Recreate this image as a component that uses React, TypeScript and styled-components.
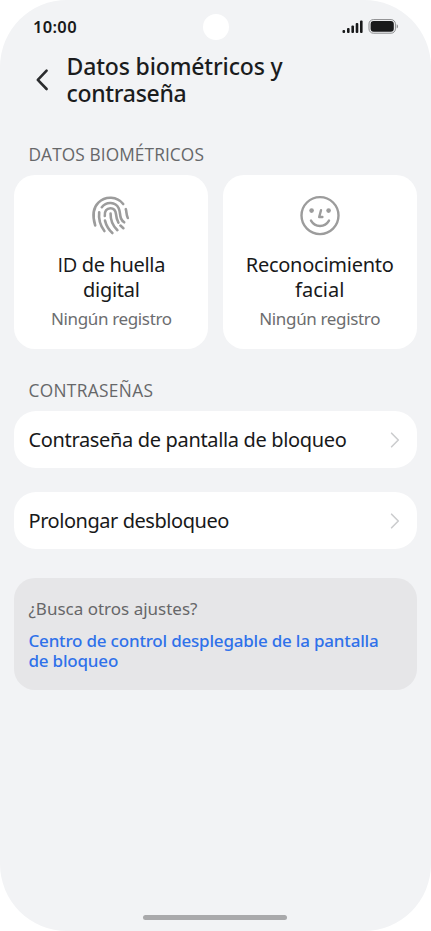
import React from 'react';
import styled, { createGlobalStyle } from 'styled-components';

const GlobalStyle = createGlobalStyle`
  * { box-sizing: border-box; }
  body { margin: 0; background: #fff; font-family: "Noto Sans", "Open Sans", sans-serif; }
  h1, h2, h3, p { margin: 0; font-weight: inherit; }
`;

const Phone = styled.main`
  width: 431px;
  height: 931px;
  padding: 0 14.3px;
  display: flex;
  flex-direction: column;
  overflow: hidden;
  background: #f2f3f5;
  border-radius: 67px;
`;

const StatusBar = styled.header`
  height: 54px;
  flex: none;
  display: grid;
  grid-template-columns: 1fr 26px 1fr;
  align-items: center;
  padding: 0 18.2px 0 18.6px;
`;

const Time = styled.span`
  font-size: 16.5px;
  font-weight: 600;
  line-height: 20px;
  letter-spacing: 0.35px;
  color: #18191a;
`;

const Camera = styled.span`
  width: 26px;
  height: 26px;
  border-radius: 50%;
  background: #fff;
`;

const Indicators = styled.div`
  display: flex;
  justify-content: flex-end;
  svg { display: block; }
`;

const TitleBar = styled.div`
  display: flex;
  flex: none;
  height: 54px;
  padding-left: 19.7px;
  gap: 16.5px;
  svg { margin-top: 14px; flex: none; }
`;

const Line = styled.span<{ $ls?: number }>`
  display: block;
  white-space: nowrap;
  letter-spacing: ${p => p.$ls ?? 0}px;
`;

const Plain = styled.span`
  font-family: "Open Sans", "Noto Sans", sans-serif;
`;

const Title = styled.h1`
  margin-top: -1px;
  font-size: 23px;
  font-weight: 500;
  line-height: 27px;
  color: #1b1c1d;
`;

const SectionLabel = styled.h2<{ $top: number }>`
  margin: ${p => p.$top}px 0 0 14.2px;
  height: 24px;
  font-family: "Open Sans", "Noto Sans", sans-serif;
  font-size: 17.3px;
  line-height: 24px;
  color: #666769;
`;

const Cards = styled.section`
  display: grid;
  grid-template-columns: 1fr 1fr;
  gap: 14.3px;
  margin-top: 8px;
`;

const Card = styled.button`
  height: 174px;
  padding: 18px 0 0;
  border: 0;
  border-radius: 21px;
  background: #fff;
  font-family: inherit;
  display: flex;
  flex-direction: column;
  align-items: center;
  svg { flex: none; }
`;

const CardTitle = styled.h3`
  margin-top: 15px;
  font-size: 20px;
  line-height: 25px;
  color: #18191a;
`;

const CardStatus = styled.p`
  margin-top: 5px;
  font-size: 17px;
  line-height: 24px;
  color: #6c6d6f;
`;

const Row = styled.button<{ $top: number }>`
  height: 57px;
  flex: none;
  margin: ${p => p.$top}px 0 0;
  padding: 0 15.7px 0 14.2px;
  border: 0;
  border-radius: 22px;
  background: #fff;
  color: #18191a;
  font-family: inherit;
  font-size: 20px;
  line-height: 28px;
  display: flex;
  align-items: center;
  justify-content: space-between;
`;

const Panel = styled.aside`
  height: 112px;
  margin-top: 29px;
  padding: 19px 14.2px;
  border-radius: 21px;
  background: #e6e6e8;
`;

const Question = styled.p`
  font-size: 17px;
  line-height: 24px;
  color: #666769;
`;

const SettingsLink = styled.a`
  display: block;
  margin-top: 10px;
  font-size: 17px;
  font-weight: 500;
  line-height: 19.5px;
  color: #2f71ea;
`;

const HomeIndicator = styled.div`
  width: 144px;
  height: 5px;
  margin: auto auto 11px 128.7px;
  border-radius: 3px;
  background: #a9a9ab;
`;

const StatusIcons = () => (
  <svg width="57" height="16" viewBox="0 0 57 16">
    <g fill="#18191a">
      <rect x="0.5" y="11" width="2.6" height="3" rx="1" />
      <rect x="5" y="9" width="2.6" height="5" rx="1" />
      <rect x="9.4" y="6.6" width="2.6" height="7.4" rx="1" />
      <rect x="13.7" y="4" width="2.6" height="10" rx="1" />
      <rect x="18" y="1.6" width="2.6" height="12.4" rx="1" />
      <rect x="28.6" y="2" width="23.2" height="10.8" rx="3" />
    </g>
    <rect x="27" y="0.6" width="26.4" height="13.6" rx="4.3" fill="none" stroke="#8a8b8d" strokeWidth="1" />
    <path d="M54.7 5.2q1.3.6 1.3 2.2t-1.3 2.2z" fill="#8a8b8d" />
  </svg>
);

const BackIcon = () => (
  <svg width="16" height="24" viewBox="0 0 16 24" fill="none" stroke="#2b2c2e" strokeWidth="2.6" strokeLinecap="round" strokeLinejoin="round">
    <path d="M12.6 2.6 3.8 11.8 12.6 21" />
  </svg>
);

const FingerprintIcon = () => (
  <svg width="44" height="44" viewBox="0 0 44 44" fill="none" stroke="#9c9c9c" strokeWidth="2.6" strokeLinecap="round">
    <path d="M6.2 32.4C3.4 23.2 4.2 14.6 9.4 9.6 16.4 2.6 28.2 3.2 34.2 11" />
    <path d="M12.8 14.2c4.6-6 13.8-5.4 16.9 1 1.8 3.8.8 6.8 2.4 10.4.7 1.6 1.7 2.7 3.1 3.7" />
    <path d="M10.2 19.2c-.8 6.8 1 13.4 5.2 18.8" />
    <path d="M15.8 23c-.6-5 2-7.8 5.6-7.8 3.8 0 5.3 2.8 5.6 6 .3 3.4.8 5.8 2.4 8.4" />
    <path d="M16 27.6c1.2 4.8 3.6 9 7.4 12.4" />
    <path d="M21.6 20.6c-.2 6.4 2 12 6.8 16.6" />
    <path d="M31.4 32.6 34.4 35.2" />
    <path d="M36.8 16.2c.9 2.8.4 5.8 2 8.8" />
  </svg>
);

const FaceIcon = () => (
  <svg width="44" height="44" viewBox="0 0 44 44" fill="none" stroke="#9c9c9c" strokeWidth="2.4" strokeLinecap="round" strokeLinejoin="round">
    <circle cx="22" cy="22.6" r="18.5" />
    <circle cx="13.6" cy="17.6" r="2.3" fill="#9c9c9c" stroke="none" />
    <circle cx="30.6" cy="17.6" r="2.3" fill="#9c9c9c" stroke="none" />
    <path d="M23 17.2 21.2 24H24.4" />
    <path d="M13 27.6c4.2 7.2 13.8 7.2 18 0" />
  </svg>
);

const Chevron = () => (
  <svg width="12" height="18" viewBox="0 0 12 18" fill="none" stroke="#cbccce" strokeWidth="1.6" strokeLinecap="round" strokeLinejoin="round">
    <path d="M2.6 2.2 9.3 9 2.6 15.8" />
  </svg>
);

export default function App() {
  return (
    <>
      <GlobalStyle />
      <Phone>
        <StatusBar>
          <Time>10:00</Time>
          <Camera />
          <Indicators><StatusIcons /></Indicators>
        </StatusBar>
        <TitleBar>
          <BackIcon />
          <Title>
            <Line $ls={-0.15}>Datos biométricos y</Line>
            <Line $ls={-0.3}>contraseña</Line>
          </Title>
        </TitleBar>
        <SectionLabel $top={35}><Line $ls={0.1}>DATOS BIOMÉTRICOS</Line></SectionLabel>
        <Cards>
          <Card>
            <FingerprintIcon />
            <CardTitle><Line $ls={-0.35}><Plain>ID</Plain> de huella</Line><Line $ls={-0.3}>digital</Line></CardTitle>
            <CardStatus><Line $ls={-0.35}>Ningún registro</Line></CardStatus>
          </Card>
          <Card>
            <FaceIcon />
            <CardTitle><Line $ls={-0.25}>Reconocimiento</Line><Line>facial</Line></CardTitle>
            <CardStatus><Line $ls={-0.35}>Ningún registro</Line></CardStatus>
          </Card>
        </Cards>
        <SectionLabel $top={30}><Line $ls={0.35}>CONTRASEÑAS</Line></SectionLabel>
        <Row $top={8}><Line $ls={-0.34}>Contraseña de pantalla de bloqueo</Line><Chevron /></Row>
        <Row $top={24}><Line $ls={-0.45}>Prolongar desbloqueo</Line><Chevron /></Row>
        <Panel>
          <Question><Line>¿Busca otros ajustes?</Line></Question>
          <SettingsLink>
            <Line $ls={-0.2}>Centro de control desplegable de la pantalla</Line>
            <Line $ls={-0.2}>de bloqueo</Line>
          </SettingsLink>
        </Panel>
        <HomeIndicator />
      </Phone>
    </>
  );
}
